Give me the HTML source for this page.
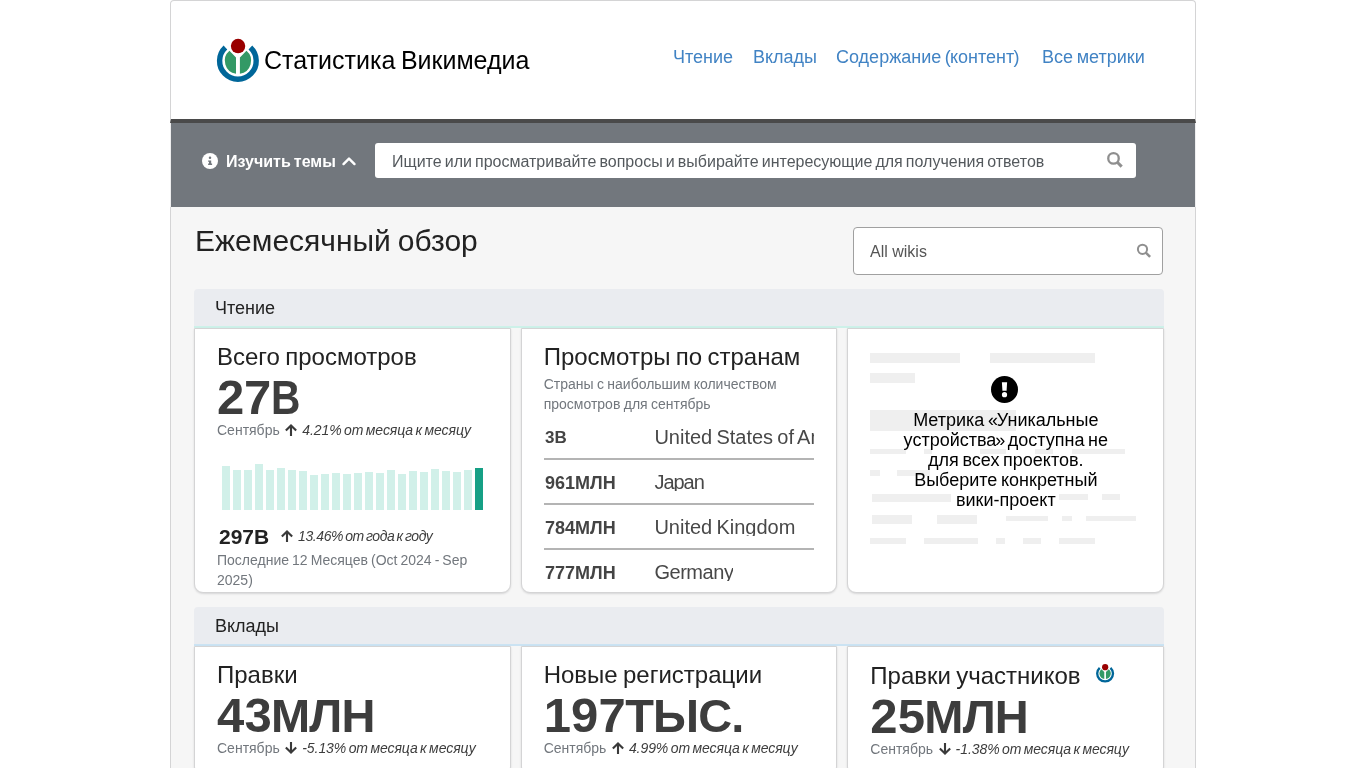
<!DOCTYPE html>
<html lang="ru">
<head>
<meta charset="utf-8">
<title>Статистика Викимедиа</title>
<style>
*{box-sizing:border-box;}
html,body{margin:0;padding:0;overflow:hidden;}
body{width:1366px;height:768px;overflow:hidden;background:#fff;font-family:"Liberation Sans",sans-serif;color:#222;position:relative;}
#wrap{position:absolute;left:170px;top:0;width:1026px;height:768px;overflow:hidden;will-change:transform;word-spacing:-0.085em;}
/* header */
#hdr{position:absolute;left:0;top:0;width:1026px;height:123px;background:#fff;border:1px solid #d4d4d5;border-bottom:4px solid #4a4a4a;border-radius:4px 4px 0 0;}
#logo{position:absolute;left:41px;top:33px;width:52px;height:52px;}
#title{position:absolute;left:93px;top:44px;font-size:25px;line-height:30px;color:#000;white-space:nowrap;}
.nav{position:absolute;top:45px;font-size:18px;line-height:22px;color:#4183c4;white-space:nowrap;}
/* topic bar */
#bar{position:absolute;left:0;top:123px;width:1026px;height:84px;background:#72777d;border-left:1px solid #eeeeef;border-right:1px solid #eeeeef;}
#explore{position:absolute;left:55px;top:29px;font-size:16px;line-height:20px;font-weight:bold;color:#fff;white-space:nowrap;}
#sinput{position:absolute;left:204px;top:20px;width:761px;height:35px;background:#fff;border-radius:3px;}
#sinput span{position:absolute;left:17px;top:9px;font-size:16px;line-height:20px;color:#54595d;white-space:nowrap;}
/* main */
#main{position:absolute;left:0;top:207px;width:1026px;height:561px;background:#f6f6f6;border-left:1px solid #d4d4d5;border-right:1px solid #d4d4d5;}
#h1{position:absolute;left:25px;top:224px;font-size:30px;line-height:34px;color:#222;white-space:nowrap;}
#wiki{position:absolute;left:683px;top:227px;width:310px;height:48px;word-spacing:0;background:#fff;border:1px solid #a0a0a0;border-radius:4px;}
#wiki span{position:absolute;left:16px;top:14px;font-size:16px;line-height:20px;color:#555;}
.sec{position:absolute;left:24px;width:970px;height:39px;background:#eaecf0;border-radius:4px 4px 0 0;font-size:18px;line-height:38px;padding-left:21px;color:#222;}
.card{position:absolute;width:316.67px;background:#fff;border:1px solid #d4d4d5;border-radius:0 0 9px 9px;box-shadow:0 1px 2px 0 rgba(34,36,38,.15);}
.card h3{position:absolute;left:22px;top:14px;margin:0;font-size:24px;line-height:28px;font-weight:normal;color:#222;white-space:nowrap;}
.big{position:absolute;left:22px;font-size:47px;line-height:48px;font-weight:bold;color:#3d3d3d;white-space:nowrap;}
.big .d{font-size:49px;letter-spacing:0.2px;}
.big .c{letter-spacing:-0.85px;margin-left:-0.9px;}
.sub{position:absolute;left:22px;font-size:14px;line-height:18px;color:#72777d;white-space:nowrap;}
.sub i{color:#3d3d3d;letter-spacing:-0.07px;}

#info{position:absolute;left:31px;top:30px;width:16px;height:16px;}
#chev{position:absolute;left:170px;top:33px;width:16px;height:10px;}
.mag{position:absolute;}
.arr{display:inline-block;width:14px;height:14px;vertical-align:-2.1px;margin:0 4px 0 2px;}
.bars{position:absolute;left:0;top:0;}
.bars i{position:absolute;width:8px;display:block;}
.tot{position:absolute;font-size:21px;line-height:24px;font-weight:bold;color:#222;white-space:nowrap;}
.yoy{position:absolute;letter-spacing:-0.4px;font-size:14px;line-height:18px;color:#3d3d3d;white-space:nowrap;}
.last{position:absolute;word-spacing:-0.85px;font-size:14px;line-height:20px;color:#72777d;white-space:nowrap;}
.desc{position:absolute;word-spacing:-0.5px;font-size:14px;line-height:20px;color:#72777d;white-space:nowrap;}
.row{position:absolute;left:22.33px;width:270px;height:38px;border-bottom:2px solid #b4b4b4;overflow:hidden;white-space:nowrap;color:#484848;}
.row b{position:absolute;left:1px;top:4px;font-size:18px;letter-spacing:0;line-height:24px;color:#444;}
.row span{position:absolute;left:110.4px;top:2.4px;font-size:20px;line-height:26px;height:22px;overflow:hidden;}
.sk i{position:absolute;display:block;background:#efefef;}
.msg{position:absolute;left:0;width:315px;top:81px;text-align:center;font-size:18px;line-height:20px;color:#000;}
</style>
</head>
<body>
<div id="wrap">
  <div id="main"></div>
  <div id="hdr">
    <svg id="logo" viewBox="0 0 52 52"><circle cx="26.05" cy="12.05" r="7.2" fill="#990000"/><path d="M13.42 13.52A18.3 18.3 0 1 0 38.38 13.52" fill="none" stroke="#006699" stroke-width="5.4"/><path d="M24 39.75A13.1 13.1 0 0 1 17.44 16.84L24 23.4ZM27.9 39.75A13.1 13.1 0 0 0 34.46 16.84L27.9 23.4Z" fill="#339966"/></svg>
    <div id="title">Статистика Викимедиа</div>
    <div class="nav" style="left:502px">Чтение</div>
    <div class="nav" style="left:582px">Вклады</div>
    <div class="nav" style="left:665px">Содержание <span style="letter-spacing:-0.9px">(</span>контент<span style="margin-left:-0.8px">)</span></div>
    <div class="nav" style="left:871px">Все метрики</div>
  </div>
  <div id="bar">
    <svg id="info" viewBox="0 0 16 16"><circle cx="8" cy="8" r="8" fill="#fff"/><circle cx="8" cy="4.8" r="1.25" fill="#72777d"/><path d="M6.1 7.4h3.1v3.2h.9v1.3H6.1v-1.3h.9V8.7h-.9z" fill="#72777d"/></svg>
    <div id="explore">Изучить темы</div>
    <svg id="chev" viewBox="0 0 16 10"><path d="M2.5 8.1L8 2.6L13.5 8.1" fill="none" stroke="#fff" stroke-width="2.4" stroke-linecap="round" stroke-linejoin="round"/></svg>
    <div id="sinput"><span>Ищите или просматривайте вопросы и выбирайте интересующие для получения ответов</span>
      <svg class="mag" style="left:730px;top:7px;width:20px;height:20px" viewBox="0 0 20 20"><circle cx="8.5" cy="8.4" r="5.25" fill="none" stroke="#8f8f8f" stroke-width="2.3"/><path d="M12.3 12.2L16.7 16.6" stroke="#8f8f8f" stroke-width="3"/></svg>
    </div>
  </div>
  <div id="h1">Ежемесячный обзор</div>
  <div id="wiki"><span>All wikis</span>
    <svg class="mag" style="left:281px;top:14px;width:18px;height:18px" viewBox="0 0 18 18"><circle cx="7.5" cy="7.3" r="4.6" fill="none" stroke="#8f8f8f" stroke-width="2"/><path d="M10.8 10.6L15.1 14.9" stroke="#8f8f8f" stroke-width="2.5"/></svg>
  </div>

  <div class="sec" style="top:289px;border-bottom:2px solid #cdf1e9">Чтение</div>
  <div class="card" style="left:24px;top:328px;height:265px">
    <h3>Всего просмотров</h3>
    <div class="big" style="top:44px;letter-spacing:-0.5px"><span class="d" style="letter-spacing:-0.15px">27</span><span style="display:inline-block;font-size:49px;transform:scaleX(.83);transform-origin:0 50%">B</span></div>
    <div class="sub" style="top:92px">Сентябрь <svg class="arr" viewBox="0 0 14 14"><path d="M7 2.5V13M1.85 7.55L7 2.4L12.15 7.55" fill="none" stroke="#3a3a3a" stroke-width="2.1"/></svg><i>4.21% от месяца к месяцу</i></div>
    <div class="bars"><i style="left:27px;top:137px;height:44px;background:#d1f0e9"></i><i style="left:38px;top:141px;height:40px;background:#d1f0e9"></i><i style="left:49px;top:141px;height:40px;background:#d1f0e9"></i><i style="left:60px;top:135px;height:46px;background:#d1f0e9"></i><i style="left:71px;top:141px;height:40px;background:#d1f0e9"></i><i style="left:82px;top:139px;height:42px;background:#d1f0e9"></i><i style="left:93px;top:141px;height:40px;background:#d1f0e9"></i><i style="left:104px;top:142px;height:39px;background:#d1f0e9"></i><i style="left:115px;top:146px;height:35px;background:#d1f0e9"></i><i style="left:126px;top:145px;height:36px;background:#d1f0e9"></i><i style="left:137px;top:144px;height:37px;background:#d1f0e9"></i><i style="left:148px;top:145px;height:36px;background:#d1f0e9"></i><i style="left:159px;top:144px;height:37px;background:#d1f0e9"></i><i style="left:170px;top:143px;height:38px;background:#d1f0e9"></i><i style="left:181px;top:144px;height:37px;background:#d1f0e9"></i><i style="left:192px;top:141px;height:40px;background:#d1f0e9"></i><i style="left:203px;top:145px;height:36px;background:#d1f0e9"></i><i style="left:214px;top:142px;height:39px;background:#d1f0e9"></i><i style="left:225px;top:143px;height:38px;background:#d1f0e9"></i><i style="left:236px;top:140px;height:41px;background:#d1f0e9"></i><i style="left:247px;top:142px;height:39px;background:#d1f0e9"></i><i style="left:258px;top:143px;height:38px;background:#d1f0e9"></i><i style="left:269px;top:141px;height:40px;background:#d1f0e9"></i><i style="left:280px;top:139px;height:42px;background:#16a085"></i></div>
    <div class="tot" style="left:24px;top:196px">297B</div>
    <div class="yoy" style="left:83px;top:198px"><svg class="arr" viewBox="0 0 14 14"><path d="M7 2.5V13M1.85 7.55L7 2.4L12.15 7.55" fill="none" stroke="#3a3a3a" stroke-width="2.1"/></svg><i>13.46% от года к году</i></div>
    <div class="last" style="left:22px;top:221px">Последние 12 Месяцев (Oct 2024 - Sep<br>2025)</div>
  </div>
  <div class="card" style="left:350.67px;top:328px;height:265px">
    <h3>Просмотры по странам</h3>
    <div class="desc" style="left:22px;top:45px">Страны с наибольшим количеством<br>просмотров для сентябрь</div>
    <div class="row" style="top:93px"><b style="font-size:17px;letter-spacing:0">3B</b><span>United States of America</span></div>
    <div class="row" style="top:138px"><b>961МЛН</b><span style="letter-spacing:-1px">Japan</span></div>
    <div class="row" style="top:183px"><b>784МЛН</b><span>United Kingdom</span></div>
    <div class="row" style="top:228px;border:0;height:35px"><b>777МЛН</b><span style="letter-spacing:-0.45px">Germany</span></div>
  </div>
  <div class="card" style="left:677.33px;top:328px;height:265px">
    <div class="sk">
      <i style="left:22px;top:24px;width:90px;height:10px"></i><i style="left:142px;top:24px;width:105px;height:10px"></i>
      <i style="left:22px;top:44px;width:45px;height:10px"></i>
      <i style="left:22px;top:81px;width:146px;height:21px"></i>
      <i style="left:22px;top:120px;width:36px;height:5px"></i><i style="left:76px;top:120px;width:8px;height:5px"></i><i style="left:132px;top:120px;width:26px;height:5px"></i><i style="left:187px;top:120px;width:18px;height:5px"></i><i style="left:224px;top:120px;width:53px;height:5px"></i>
      <i style="left:22px;top:141px;width:10px;height:6px"></i><i style="left:49px;top:141px;width:33px;height:6px"></i>
      <i style="left:24px;top:165px;width:79px;height:8px"></i><i style="left:211px;top:165px;width:29px;height:6px"></i><i style="left:254px;top:165px;width:18px;height:6px"></i>
      <i style="left:24px;top:186px;width:40px;height:9px"></i><i style="left:89px;top:186px;width:40px;height:9px"></i><i style="left:158px;top:187px;width:42px;height:5px"></i><i style="left:214px;top:187px;width:10px;height:5px"></i><i style="left:238px;top:187px;width:50px;height:5px"></i>
      <i style="left:22px;top:209px;width:36px;height:6px"></i><i style="left:76px;top:209px;width:54px;height:6px"></i><i style="left:148px;top:209px;width:9px;height:6px"></i><i style="left:175px;top:209px;width:18px;height:6px"></i><i style="left:211px;top:209px;width:36px;height:6px"></i>
    </div>
    <svg style="position:absolute;left:143px;top:47px;width:27px;height:27px" viewBox="0 0 27 27"><circle cx="13.5" cy="13.5" r="13.5" fill="#000"/><path d="M10.9 6.2h5.2l-.5 8.6h-4.2z" fill="#fff"/><circle cx="13.5" cy="18.7" r="2.6" fill="#fff"/></svg>
    <div class="msg">Метрика <span style="letter-spacing:-1.2px">«</span>Уникальные<br>устройства<span style="margin-left:-1px;letter-spacing:-1.2px">»</span> доступна не<br>для всех проектов.<br>Выберите конкретный<br>вики-проект</div>
  </div>

  <div class="sec" style="top:607px;border-bottom:2px solid #cbe3f3">Вклады</div>
  <div class="card" style="left:24px;top:646px;height:130px">
    <h3>Правки</h3>
    <div class="big" style="top:44px;letter-spacing:0"><span class="d">43</span><span class="c">МЛН</span></div>
    <div class="sub" style="top:92px">Сентябрь <svg class="arr" viewBox="0 0 14 14"><path d="M7 11.5V1M1.85 6.45L7 11.6L12.15 6.45" fill="none" stroke="#3a3a3a" stroke-width="2.1"/></svg><i>-5.13% от месяца к месяцу</i></div>
  </div>
  <div class="card" style="left:350.67px;top:646px;height:130px">
    <h3>Новые регистрации</h3>
    <div class="big" style="top:44px;letter-spacing:0"><span class="d">197</span><span class="c">ТЫС.</span></div>
    <div class="sub" style="top:92px">Сентябрь <svg class="arr" viewBox="0 0 14 14"><path d="M7 2.5V13M1.85 7.55L7 2.4L12.15 7.55" fill="none" stroke="#3a3a3a" stroke-width="2.1"/></svg><i>4.99% от месяца к месяцу</i></div>
  </div>
  <div class="card" style="left:677.33px;top:646px;height:130px">
    <h3 style="top:15px">Правки участников</h3>
    <svg style="position:absolute;left:248px;top:17.40px;width:18.2px;height:18.7px" viewBox="4.8 4.8 42.2 43.2"><circle cx="26.05" cy="12.05" r="7.2" fill="#990000"/><path d="M13.42 13.52A18.3 18.3 0 1 0 38.38 13.52" fill="none" stroke="#006699" stroke-width="5.4"/><path d="M24 39.75A13.1 13.1 0 0 1 17.44 16.84L24 23.4ZM27.9 39.75A13.1 13.1 0 0 0 34.46 16.84L27.9 23.4Z" fill="#339966"/></svg>
    <div class="big" style="top:45px;letter-spacing:0"><span class="d">25</span><span class="c">МЛН</span></div>
    <div class="sub" style="top:93px">Сентябрь <svg class="arr" viewBox="0 0 14 14"><path d="M7 11.5V1M1.85 6.45L7 11.6L12.15 6.45" fill="none" stroke="#3a3a3a" stroke-width="2.1"/></svg><i>-1.38% от месяца к месяцу</i></div>
  </div>
</div>
</body>
</html>
